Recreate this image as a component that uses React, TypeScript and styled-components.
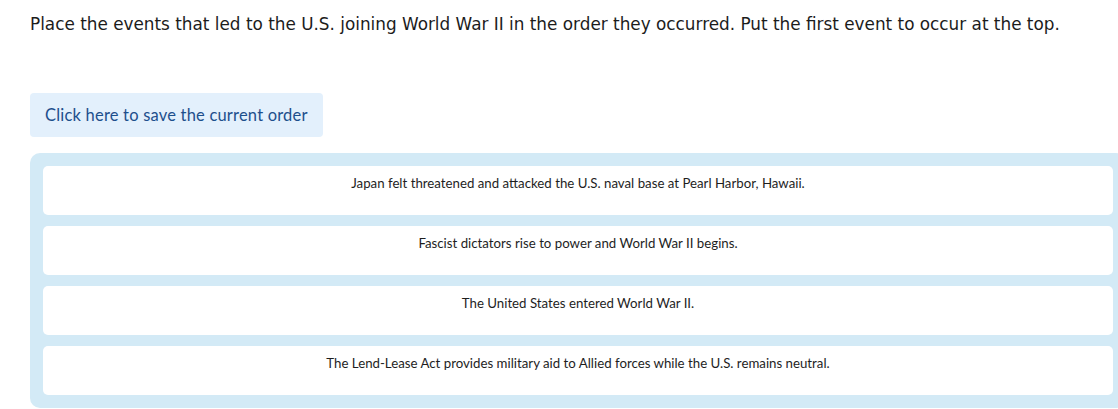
import React from "react"
import styled, { createGlobalStyle } from "styled-components"

const GlobalStyle = createGlobalStyle`
  html, body {
    margin: 0;
    padding: 0;
    background: #ffffff;
    overflow: hidden;
  }
`

const Page = styled.div`
  padding: 11px 0 0 30px;
  width: 1118px;
  box-sizing: border-box;
`

const Prompt = styled.p`
  margin: 0;
  font-family: "DejaVu Sans", "Open Sans", sans-serif;
  font-size: 16.85px;
  line-height: 26px;
  color: #1c1c1c;
  white-space: nowrap;
`

const SaveButton = styled.button`
  display: block;
  margin-top: 56px;
  height: 44px;
  padding: 0 15px;
  border: none;
  border-radius: 4px;
  background: #e3f0fc;
  color: #1d4f8c;
  font-family: Lato, "Open Sans", sans-serif;
  font-size: 16.5px;
  letter-spacing: 0.2px;
  cursor: pointer;
`

const List = styled.ul`
  list-style: none;
  margin: 16px -8px 0 0;
  padding: 13px;
  display: flex;
  flex-direction: column;
  gap: 11px;
  background: #d3eaf6;
  border-radius: 10px;
`

const Item = styled.li`
  height: 49px;
  box-sizing: border-box;
  padding-top: 9px;
  background: #ffffff;
  border-radius: 5px;
  text-align: center;
  font-family: Lato, "Open Sans", sans-serif;
  font-size: 13.25px;
  line-height: 17px;
  color: #1e1e1e;
`

const events = [
  "Japan felt threatened and attacked the U.S. naval base at Pearl Harbor, Hawaii.",
  "Fascist dictators rise to power and World War II begins.",
  "The United States entered World War II.",
  "The Lend-Lease Act provides military aid to Allied forces while the U.S. remains neutral.",
]

const App: React.FC = () => (
  <>
    <GlobalStyle />
    <Page>
      <Prompt>
        Place the events that led to the U.S. joining World War II in the order they occurred. Put the first event to occur at the top.
      </Prompt>
      <SaveButton>Click here to save the current order</SaveButton>
      <List>
        {events.map((e) => (
          <Item key={e}>{e}</Item>
        ))}
      </List>
    </Page>
  </>
)

export default App
